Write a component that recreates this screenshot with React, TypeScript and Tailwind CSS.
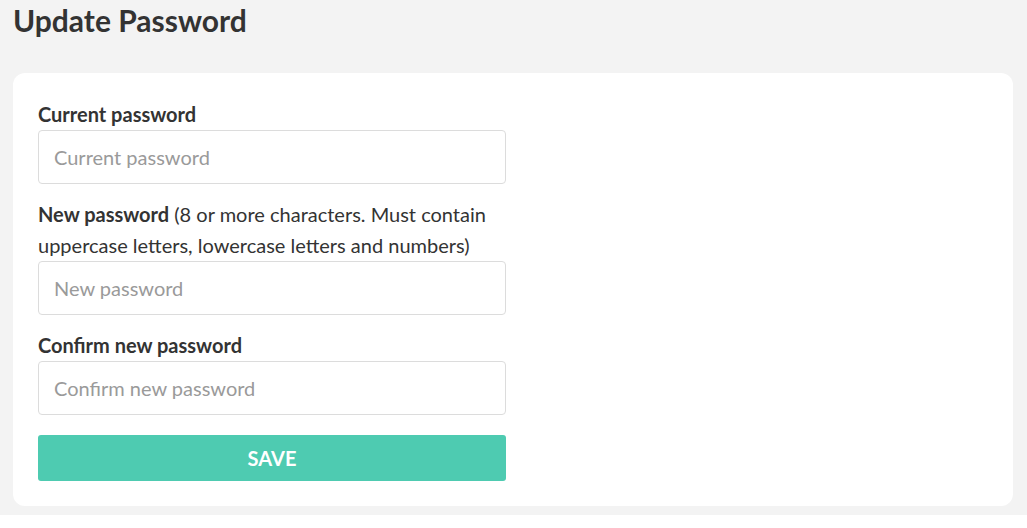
export default function App() {
  const fields = [
    { label: "Current password", hint: "", placeholder: "Current password" },
    {
      label: "New password",
      hint: " (8 or more characters. Must contain uppercase letters, lowercase letters and numbers)",
      placeholder: "New password",
    },
    { label: "Confirm new password", hint: "", placeholder: "Confirm new password" },
  ];

  return (
    <div className="bg-white w-[1027px] h-[528px]" style={{ fontFamily: "Lato, 'Open Sans', sans-serif" }}>
      <div className="bg-[#f3f3f3] h-[515px] px-[13px] pr-[14px]">
        <h1 className="text-[30px] leading-[40px] font-bold text-[#333]">Update Password</h1>
        <div className="mt-[33px] bg-white rounded-[12px] px-[25px] pt-[26px] pb-[25px]">
          <form className="w-[468px]">
            {fields.map((f, i) => (
              <div key={f.label} className={i === fields.length - 1 ? "mb-[20px]" : "mb-[15px]"}>
                <label className="block text-[20px] leading-[31px] text-[#333]">
                  <span className="font-bold">{f.label}</span>
                  {f.hint}
                </label>
                <input
                  type="password"
                  placeholder={f.placeholder}
                  className="block w-full h-[54px] border border-[#dcdcdc] rounded-[4px] px-[15px] text-[20px] text-[#333] placeholder:text-[#9a9a9a] outline-none"
                />
              </div>
            ))}
            <button
              type="button"
              className="block w-full h-[46px] rounded-[3px] bg-[#4ecbb1] text-white text-[20px] font-bold"
            >
              SAVE
            </button>
          </form>
        </div>
      </div>
    </div>
  );
}
